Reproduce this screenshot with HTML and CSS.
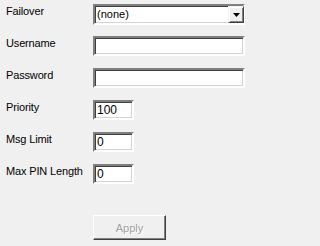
FILE: index.html
```html
<!DOCTYPE html>
<html>
<head>
<meta charset="utf-8">
<link rel="stylesheet" href="styles.css">
</head>
<body>
<div class="dialog">
  <div class="form">
    <div class="row">
      <span class="label">Failover</span>
      <div class="combo">
        <span class="combo-text">(none)</span>
        <span class="combo-btn"><svg width="7" height="4" viewBox="0 0 7 4"><path d="M0 0h7L3.5 4z" fill="#000"/></svg></span>
      </div>
    </div>
    <div class="row">
      <span class="label">Username</span>
      <div class="field wide"></div>
    </div>
    <div class="row">
      <span class="label">Password</span>
      <div class="field wide"></div>
    </div>
    <div class="row">
      <span class="label">Priority</span>
      <div class="field short">100</div>
    </div>
    <div class="row">
      <span class="label">Msg Limit</span>
      <div class="field short">0</div>
    </div>
    <div class="row">
      <span class="label">Max PIN Length</span>
      <div class="field short">0</div>
    </div>
  </div>
  <div class="actions">
    <button class="apply" disabled>Apply</button>
  </div>
</div>
</body>
</html>
```
FILE: styles.css
```css
html, body {
  margin: 0;
  padding: 0;
  background: #f0f0f0;
}
body {
  width: 247px;
  height: 246px;
  overflow: hidden;
  font-family: "Liberation Sans", Arial, sans-serif;
  font-size: 11px;
  color: #000;
}
.dialog {
  padding: 4px 2px 0 6px;
}
.form {
  display: flex;
  flex-direction: column;
  gap: 12px;
}
.row {
  display: flex;
  align-items: flex-start;
  height: 20px;
}
.label {
  width: 87px;
  line-height: 13px;
  padding-top: 1px;
  letter-spacing: -0.15px;
}
.field, .combo {
  box-sizing: border-box;
  height: 20px;
  background: #fff;
  border-style: solid;
  border-width: 2px;
  border-color: #808080 #fff #fff #808080;
  box-shadow: inset 1px 1px 0 #404040, inset -1px -1px 0 #d4d4d4;
  line-height: 16px;
  padding-left: 2px;
}
.wide {
  width: 152px;
}
.short {
  width: 41px;
  font-size: 12px;
}
.combo {
  width: 152px;
  height: 21px;
  display: flex;
  align-items: center;
  justify-content: space-between;
  padding-right: 0;
}
.combo-text {
  line-height: 15px;
}
.combo-btn {
  box-sizing: border-box;
  width: 16px;
  height: 17px;
  background: #f0f0f0;
  border-style: solid;
  border-width: 1px;
  border-color: #f0f0f0 #404040 #404040 #f0f0f0;
  box-shadow: inset 1px 1px 0 #fff, inset -1px -1px 0 #808080;
  display: flex;
  align-items: center;
  justify-content: center;
  margin-right: -1px;
}
.actions {
  padding: 31px 0 0 87px;
}
.apply {
  box-sizing: border-box;
  width: 73px;
  height: 25px;
  background: #f0f0f0;
  border-style: solid;
  border-width: 1px;
  border-color: #fff #404040 #404040 #fff;
  box-shadow: inset -1px -1px 0 #808080;
  font-family: "Liberation Sans", Arial, sans-serif;
  font-size: 11px;
  color: #a0a0a0;
  text-shadow: 1px 1px 0 #fff;
  padding: 0;
}
```
